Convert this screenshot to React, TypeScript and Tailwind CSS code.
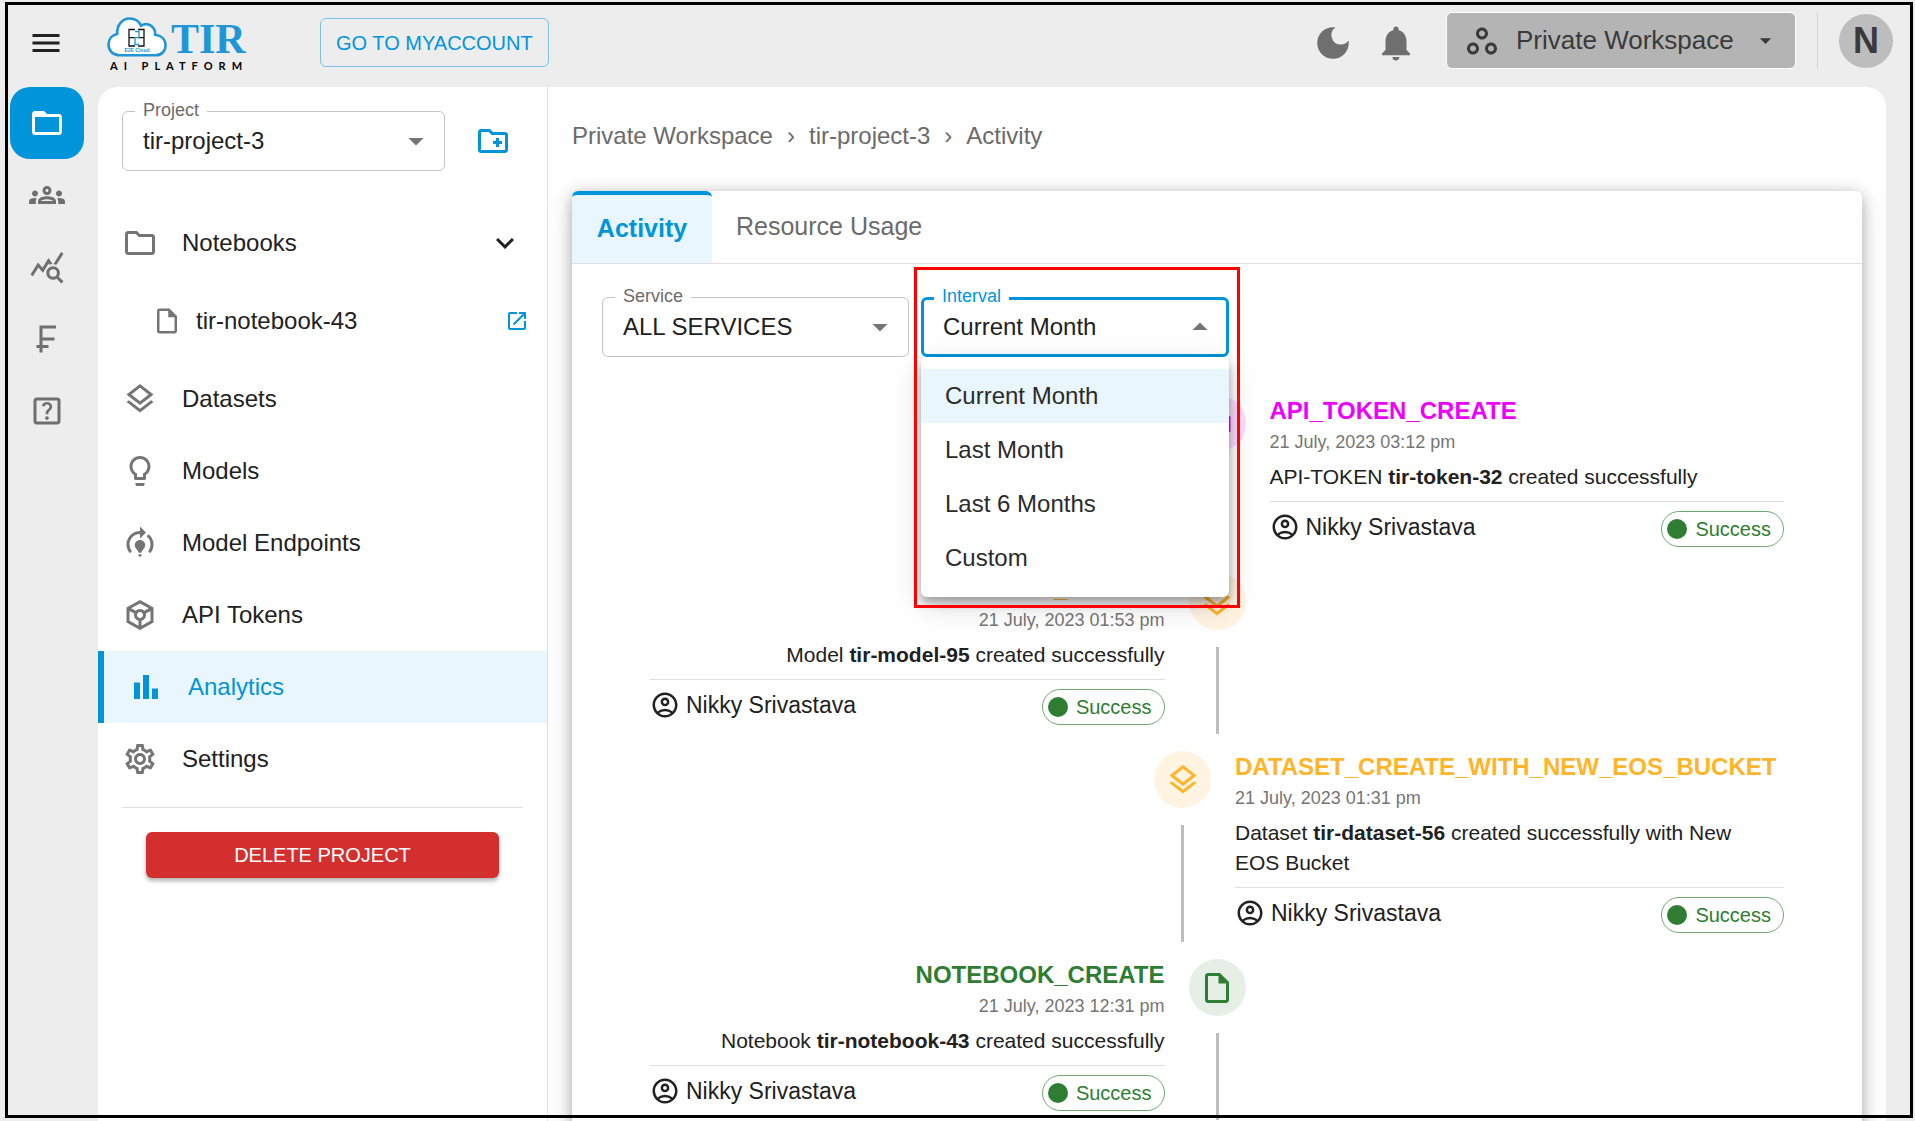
import { useState } from "react";
import type { ReactNode } from "react";
import type { IconType } from "react-icons";
import clsx from "clsx";
import {
  MdArrowDropDown,
  MdArrowDropUp,
  MdBarChart,
  MdCurrencyFranc,
  MdDarkMode,
  MdExpandMore,
  MdFolderOpen,
  MdMenu,
  MdModelTraining,
  MdNotifications,
  MdOpenInNew,
  MdOutlineAccountCircle,
  MdOutlineCreateNewFolder,
  MdOutlineFolder,
  MdOutlineGroups,
  MdOutlineHelpCenter,
  MdOutlineInsertDriveFile,
  MdOutlineLayers,
  MdOutlineLightbulb,
  MdOutlineSettings,
  MdOutlineToken,
  MdOutlineWorkspaces,
  MdQueryStats,
} from "react-icons/md";

const railItems = [
  { label: "Members", icon: MdOutlineGroups },
  { label: "Usage", icon: MdQueryStats },
  { label: "Billing", icon: MdCurrencyFranc },
  { label: "Help", icon: MdOutlineHelpCenter },
];

const menuItems = [
  { label: "Datasets", icon: MdOutlineLayers },
  { label: "Models", icon: MdOutlineLightbulb },
  { label: "Model Endpoints", icon: MdModelTraining },
  { label: "API Tokens", icon: MdOutlineToken },
  { label: "Analytics", icon: MdBarChart, active: true },
  { label: "Settings", icon: MdOutlineSettings },
];

const intervals = ["Current Month", "Last Month", "Last 6 Months", "Custom"];

type Activity = {
  title: string;
  date: string;
  kind: string;
  name: string;
  text: string;
  icon: IconType;
  titleColor: string;
  dotColor: string;
  wide?: boolean;
};

const activities: Activity[] = [
  {
    title: "API_TOKEN_CREATE",
    date: "21 July, 2023 03:12 pm",
    kind: "API-TOKEN",
    name: "tir-token-32",
    text: "created successfully",
    icon: MdOutlineToken,
    titleColor: "text-[#ee00ff]",
    dotColor: "bg-[#fbdcfd] text-[#ee00ff]",
  },
  {
    title: "MODEL_CREATE",
    date: "21 July, 2023 01:53 pm",
    kind: "Model",
    name: "tir-model-95",
    text: "created successfully",
    icon: MdOutlineLayers,
    titleColor: "text-[#ffb429]",
    dotColor: "bg-[#fff4e2] text-[#ffb429]",
  },
  {
    title: "DATASET_CREATE_WITH_NEW_EOS_BUCKET",
    date: "21 July, 2023 01:31 pm",
    kind: "Dataset",
    name: "tir-dataset-56",
    text: "created successfully with New EOS\u00a0Bucket",
    icon: MdOutlineLayers,
    titleColor: "text-[#ffb429]",
    dotColor: "bg-[#fff4e2] text-[#ffb429]",
    wide: true,
  },
  {
    title: "NOTEBOOK_CREATE",
    date: "21 July, 2023 12:31 pm",
    kind: "Notebook",
    name: "tir-notebook-43",
    text: "created successfully",
    icon: MdOutlineInsertDriveFile,
    titleColor: "text-[#2e7d32]",
    dotColor: "bg-[#e5efe5] text-[#2e7d32]",
  },
];

function Logo() {
  return (
    <a href="#" aria-label="TIR AI Platform" className="block w-[144px] pt-[3px]">
      <div className="flex items-center gap-1">
        <svg viewBox="0 0 60 40" className="h-10 w-[60px]" aria-hidden="true">
          <path
            d="M13 38.3C6 38.3 1.5 33.8 1.5 27.6C1.5 22 5 18 10.2 17C9.6 8 15.500 1.500 22.500 1.500C28 1.500 32 4.300 34 8.600C41 4.800 48.500 9.500 48.200 17.800C54.500 18.500 58.500 22.500 58.500 28.500C58.500 34 54.500 38.300 48.500 38.300Z"
            fill="#fff"
            stroke="#2196d6"
            strokeWidth="2.6"
          />
          <g fill="none" strokeWidth="1.3">
            <path d="M28 12.500H22V29H28M22 20.700H28" stroke="#111" />
            <path d="M31 12.500H37V29H31M31 20.700H37" stroke="#111" />
            <path d="M28 14.500H32V20.700H28V27.500H32" stroke="#2196d6" />
          </g>
          <text
            x="30"
            y="35"
            textAnchor="middle"
            fontSize="5"
            fontWeight="700"
            fill="#2196d6"
            fontFamily="Liberation Sans, sans-serif"
          >
            E2E Cloud
          </text>
        </svg>
        <span className="self-end font-['Liberation_Serif',serif] text-[42px] leading-9 font-bold text-[#2196d6]">
          TIR
        </span>
      </div>
      <div className="mt-[3px] pl-[3px] font-[Lato,sans-serif] text-[11px] leading-3 font-bold tracking-[6px] whitespace-nowrap text-black">
        AI PLATFORM
      </div>
    </a>
  );
}

function Header() {
  return (
    <header className="flex h-[87px] shrink-0 items-center pr-[22px] pb-0.5 pl-7 text-[#6f6f6f]">
      <button aria-label="Menu" className="text-[#212121]">
        <MdMenu size={36} />
      </button>
      <div className="ml-[43px]">
        <Logo />
      </div>
      <button className="ml-[69px] h-[49px] rounded-md border border-[#79c2e8] px-[15px] text-[20px] text-[#0095db]">
        GO TO MYACCOUNT
      </button>
      <div className="ml-auto flex items-center gap-[21px]">
        <button aria-label="Dark mode">
          <MdDarkMode size={42} />
        </button>
        <button aria-label="Notifications">
          <MdNotifications size={42} />
        </button>
      </div>
      <div className="ml-[29px] flex items-center pb-1">
        <button className="flex h-[57px] w-[350px] items-center rounded-md border border-white bg-[#b4b4b4] pl-[17px] text-[26px] text-[#3a3a3a]">
          <MdOutlineWorkspaces size={36} />
          <span className="ml-4">Private Workspace</span>
          <MdArrowDropDown size={27} className="ml-[18px]" />
        </button>
        <div className="ml-[21px] h-14 w-px bg-[#d2d2d2]" />
        <button
          aria-label="Account"
          className="ml-[21px] size-[54px] rounded-full bg-[#bdbdbd] text-[36px] leading-[54px] font-bold text-[#3a3a3a]"
        >
          N
        </button>
      </div>
    </header>
  );
}

function Rail() {
  return (
    <nav aria-label="Main" className="flex w-[98px] shrink-0 flex-col pr-3.5 pl-2.5 text-[#6f6f6f]">
      <button
        aria-label="Projects"
        className="flex h-[72px] items-center justify-center rounded-[20px] bg-[#0095db] text-white"
      >
        <MdFolderOpen size={36} />
      </button>
      {railItems.map(({ label, icon: Icon }) => (
        <button key={label} aria-label={label} className="flex h-[72px] items-center justify-center">
          <Icon size={36} />
        </button>
      ))}
    </nav>
  );
}

type SelectBoxProps = {
  id: string;
  label: string;
  options: string[];
  value: string;
  onChange: (value: string) => void;
  open?: boolean;
  className?: string;
  children?: ReactNode;
};

function SelectBox({ id, label, options, value, onChange, open, className, children }: SelectBoxProps) {
  const Arrow = open ? MdArrowDropUp : MdArrowDropDown;
  return (
    <div className={clsx("relative", className)}>
      <select
        id={id}
        value={value}
        onChange={(e) => onChange(e.target.value)}
        className={clsx(
          "h-[60px] w-full appearance-none rounded-md bg-white text-[24px] text-[#212121] outline-none",
          open ? "border-[3px] border-[#0095db] pl-[19px]" : "border border-[#c4c4c4] pl-5"
        )}
      >
        {options.map((option) => (
          <option key={option}>{option}</option>
        ))}
      </select>
      <label
        htmlFor={id}
        className={clsx(
          "absolute -top-[11px] left-[13px] bg-white px-2 text-[18px] leading-5",
          open ? "text-[#0095db]" : "text-[#6b6b6b]"
        )}
      >
        {label}
      </label>
      <Arrow size={36} className="pointer-events-none absolute top-3 right-[11px] text-[#757575]" />
      {children}
    </div>
  );
}

function Sidebar() {
  return (
    <aside className="w-[450px] shrink-0 border-r border-[#e0e0e0]">
      <div className="flex items-center gap-[30px] pt-6 pl-6">
        <SelectBox
          id="project"
          label="Project"
          options={["tir-project-3"]}
          value="tir-project-3"
          onChange={() => {}}
          className="w-[323px]"
        />
        <button aria-label="Create project" className="text-[#0095db]">
          <MdOutlineCreateNewFolder size={36} />
        </button>
      </div>

      <ul className="mt-9 text-[24px] text-[#212121]">
        <li>
          <button className="flex h-[72px] w-full items-center pr-6 pl-6">
            <MdOutlineFolder size={36} className="text-[#757575]" />
            <span className="ml-6">Notebooks</span>
            <MdExpandMore size={36} className="ml-auto" />
          </button>
        </li>
        <li className="flex h-[84px] items-center pr-[18px] pl-[54px]">
          <MdOutlineInsertDriveFile size={30} className="text-[#757575]" />
          <a href="#" className="ml-3.5">
            tir-notebook-43
          </a>
          <a href="#" aria-label="Open notebook" className="ml-auto text-[#0095db]">
            <MdOpenInNew size={24} />
          </a>
        </li>
        {menuItems.map(({ label, icon: Icon, active }) => (
          <li key={label}>
            <a
              href="#"
              className={clsx(
                "flex h-[72px] items-center gap-6 pl-6",
                active && "border-l-6 border-[#0095db] bg-[#eaf6fd] text-[#0095db]"
              )}
            >
              <Icon size={36} className={active ? "" : "text-[#757575]"} />
              {label}
            </a>
          </li>
        ))}
      </ul>

      <hr className="mx-6 mt-3 border-[#e0e0e0]" />
      <div className="px-12 pt-6">
        <button className="h-[46px] w-full rounded-md bg-[#d32f2f] text-[20px] text-white shadow-[0_3px_4px_rgba(0,0,0,0.3)]">
          DELETE PROJECT
        </button>
      </div>
    </aside>
  );
}

function IntervalMenu({ value, onSelect }: { value: string; onSelect: (value: string) => void }) {
  return (
    <ul
      role="listbox"
      aria-label="Interval"
      className="absolute top-[60px] left-0 z-10 w-full rounded-md bg-white py-3 shadow-[0_6px_10px_rgba(0,0,0,0.3),0_8px_30px_rgba(0,0,0,0.16)]"
    >
      {intervals.map((interval) => (
        <li key={interval} role="option" aria-selected={interval === value}>
          <button
            onClick={() => onSelect(interval)}
            className={clsx(
              "h-[54px] w-full pl-6 text-left text-[24px] text-[#2b2b2b]",
              interval === value && "bg-[#eaf6fd]"
            )}
          >
            {interval}
          </button>
        </li>
      ))}
    </ul>
  );
}

function ActivityDetails({ item, alignRight }: { item: Activity; alignRight: boolean }) {
  return (
    <div className={clsx("flex-1 px-6 pt-[15px] pb-[9px]", item.wide && "min-w-[597px]")}>
      <div className={alignRight ? "text-right" : ""}>
        <h3 className={clsx("text-[24px] leading-9 font-bold", item.titleColor)}>{item.title}</h3>
        <p className="text-[18px] leading-[27px] text-[#757575]">{item.date}</p>
        <p className="mt-1.5 text-[21px] leading-[30px] text-[#212121]">
          {item.kind} <b>{item.name}</b> {item.text}
        </p>
      </div>
      <hr className="mt-[9px] border-[#dedede]" />
      <div className="mt-[9px] flex items-start justify-between">
        <div className="flex items-center gap-1.5 text-[23px] leading-8 text-[#212121]">
          <MdOutlineAccountCircle size={30} />
          Nikky Srivastava
        </div>
        <span className="flex h-9 items-center gap-2 rounded-full border border-[#6fa972] pr-3 pl-[5px] text-[20px] text-[#2e7d32]">
          <span className="size-5 rounded-full bg-[#2e7d32]" />
          Success
        </span>
      </div>
    </div>
  );
}

function Timeline() {
  return (
    <ol className="mt-[21px] px-6">
      {activities.map((item, i) => {
        const onLeft = i % 2 === 1;
        const Icon = item.icon;
        return (
          <li key={item.title} className={clsx("flex", onLeft && "flex-row-reverse")}>
            <div className="flex-1 px-6" />
            <div className="flex flex-col items-center">
              <span
                className={clsx(
                  "my-[17px] flex size-[57px] items-center justify-center rounded-full",
                  item.dotColor
                )}
              >
                <Icon size={36} />
              </span>
              <span className="w-[3px] grow bg-[#bdbdbd]" />
            </div>
            <ActivityDetails item={item} alignRight={onLeft} />
          </li>
        );
      })}
    </ol>
  );
}

function ActivityPage() {
  const [service, setService] = useState("ALL SERVICES");
  const [interval, setInterval] = useState("Current Month");

  return (
    <main className="min-w-0 flex-1 px-6 pt-[31px]">
      <nav aria-label="Breadcrumb" className="flex gap-3.5 text-[24px] leading-9 text-[#6b6b6b]">
        <a href="#">Private Workspace</a>
        <span>›</span>
        <a href="#">tir-project-3</a>
        <span>›</span>
        <span>Activity</span>
      </nav>

      <section className="mt-[37px] min-h-full rounded-md bg-white shadow-[0_3px_14px_rgba(0,0,0,0.28),0_8px_30px_rgba(0,0,0,0.12)]">
        {/* Tabs */}
        <div role="tablist" className="flex h-[73px] border-b border-[#dedede] text-[25px]">
          <button
            role="tab"
            aria-selected="true"
            className="w-[140px] rounded-t-md border-t-4 border-[#0095db] bg-[#eaf6fd] font-bold text-[#0095db]"
          >
            Activity
          </button>
          <button role="tab" aria-selected="false" className="px-6 text-[#6b6b6b]">
            Resource Usage
          </button>
        </div>

        <div className="px-[30px] pt-[33px]">
          {/* Filters */}
          <div className="flex gap-3">
            <SelectBox
              id="service"
              label="Service"
              options={["ALL SERVICES"]}
              value={service}
              onChange={setService}
              className="w-[307px]"
            />
            <SelectBox
              id="interval"
              label="Interval"
              options={intervals}
              value={interval}
              onChange={setInterval}
              open
              className="w-[308px]"
            >
              <IntervalMenu value={interval} onSelect={setInterval} />
              <div className="pointer-events-none absolute -top-[30px] -right-[11px] -left-[7px] z-20 h-[341px] border-[3px] border-[#ff0000]" />
            </SelectBox>
          </div>
          <Timeline />
        </div>
      </section>
    </main>
  );
}

export default function App() {
  return (
    <div className="relative flex h-screen flex-col overflow-hidden bg-[#ededed] font-['Liberation_Sans',Arial,sans-serif]">
      <Header />
      <div className="flex min-h-0 flex-1 pr-[29px]">
        <Rail />
        <div className="flex min-w-0 flex-1 overflow-hidden rounded-t-[20px] bg-white">
          <Sidebar />
          <ActivityPage />
        </div>
      </div>
      <div className="pointer-events-none absolute top-0.5 right-0.5 bottom-[3px] left-[5px] z-30 border-[3px] border-black" />
    </div>
  );
}
